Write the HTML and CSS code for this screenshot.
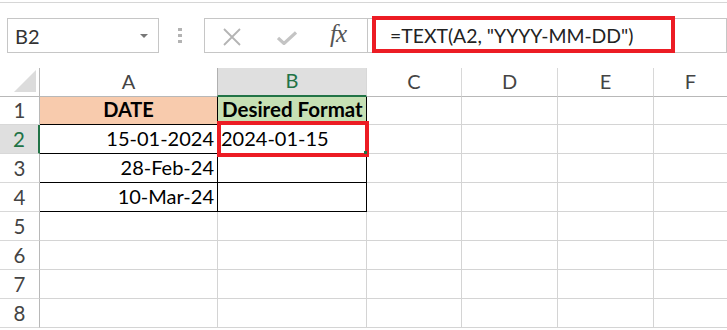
FILE: index.html
```html
<!DOCTYPE html>
<html>
<head>
<meta charset="utf-8">
<link rel="stylesheet" href="styles.css">
</head>
<body>
<div class="app">
  <div class="ribbon-edge"></div>
  <div class="formula-row">
    <div class="name-box">
      <span class="name-text">B2</span>
      <span class="dropdown"></span>
    </div>
    <div class="grip"><i></i><i></i><i></i></div>
    <div class="buttons">
      <svg class="icon-x" width="18" height="18" viewBox="0 0 18 18"><path d="M1 1 L17 17 M17 1 L1 17" stroke="#b4b4b4" stroke-width="1.8" fill="none"/></svg>
      <svg class="icon-check" width="20" height="14" viewBox="0 0 20 14"><path d="M1 7 L7 12.5 L19 1.5" stroke="#c4c4c4" stroke-width="3.2" fill="none" stroke-linejoin="miter"/></svg>
      <span class="fx">fx</span>
    </div>
    <div class="formula-input">
      <span class="formula-text">=TEXT(A2, "YYYY-MM-DD")</span>
      <div class="red-box formula-mark"></div>
    </div>
  </div>

  <div class="sheet">
    <div class="corner"><svg width="22" height="22" viewBox="0 0 22 22"><polygon points="22,0 22,22 0,22" fill="#dcdcdc"/></svg></div>
    <div class="col-hdr">A</div>
    <div class="col-hdr active">B</div>
    <div class="col-hdr">C</div>
    <div class="col-hdr">D</div>
    <div class="col-hdr">E</div>
    <div class="col-hdr last">F</div>

    <div class="row-hdr">1</div>
    <div class="cell t-a head-a bold center">DATE</div>
    <div class="cell t-b head-b bold">Desired Format</div>
    <div class="cell"></div><div class="cell"></div><div class="cell"></div><div class="cell last"></div>

    <div class="row-hdr active">2</div>
    <div class="cell t-a right sel-left">15-01-2024</div>
    <div class="cell t-b overlay-host">2024-01-15<div class="red-box cell-mark"></div><span class="handle"></span></div>
    <div class="cell"></div><div class="cell"></div><div class="cell"></div><div class="cell last"></div>

    <div class="row-hdr">3</div>
    <div class="cell t-a right">28-Feb-24</div>
    <div class="cell t-b"></div>
    <div class="cell"></div><div class="cell"></div><div class="cell"></div><div class="cell last"></div>

    <div class="row-hdr">4</div>
    <div class="cell t-a right">10-Mar-24</div>
    <div class="cell t-b"></div>
    <div class="cell"></div><div class="cell"></div><div class="cell"></div><div class="cell last"></div>

    <div class="row-hdr">5</div>
    <div class="cell"></div><div class="cell"></div><div class="cell"></div><div class="cell"></div><div class="cell"></div><div class="cell last"></div>
    <div class="row-hdr">6</div>
    <div class="cell"></div><div class="cell"></div><div class="cell"></div><div class="cell"></div><div class="cell"></div><div class="cell last"></div>
    <div class="row-hdr">7</div>
    <div class="cell"></div><div class="cell"></div><div class="cell"></div><div class="cell"></div><div class="cell"></div><div class="cell last"></div>
    <div class="row-hdr">8</div>
    <div class="cell"></div><div class="cell"></div><div class="cell"></div><div class="cell"></div><div class="cell"></div><div class="cell last"></div>
  </div>
</div>
</body>
</html>
```

FILE: styles.css
```css
* { box-sizing: border-box; }
html, body { margin: 0; padding: 0; background: #fff; }
body { width: 727px; height: 330px; overflow: hidden; font-family: Lato, "Open Sans", sans-serif; }

.app { width: 727px; }

.ribbon-edge { height: 3px; border-bottom: 1px solid #d6d6d6; }

.formula-row {
  display: flex;
  align-items: stretch;
  height: 35px;
  margin-top: 15px;
}
.name-box {
  margin-left: 7px;
  width: 152px;
  border: 1px solid #c6c6c6;
  display: flex;
  align-items: center;
  justify-content: space-between;
  padding: 0 10px 0 7px;
}
.name-text { font-size: 20px; color: #333; }
.dropdown {
  width: 0; height: 0;
  border-left: 4px solid transparent;
  border-right: 4px solid transparent;
  border-top: 4px solid #777;
}
.grip {
  width: 45px;
  display: flex;
  flex-direction: column;
  justify-content: center;
  gap: 3px;
  padding-left: 19px;
}
.grip i { display: block; width: 4px; height: 3px; background: #b3b3b3; }

.buttons {
  width: 164px;
  border: 1px solid #c6c6c6;
  display: flex;
  align-items: center;
  padding-left: 18px;
}
.icon-x { margin-top: 2px; }
.icon-check { margin-left: 36px; margin-top: 5px; }
.fx {
  margin-left: 33px;
  font-family: "Liberation Serif", serif;
  font-style: italic;
  font-size: 25px;
  color: #555;
  margin-top: -3px;
  letter-spacing: -1px;
}

.formula-input {
  flex: 1;
  border: 1px solid #c6c6c6;
  border-left: none;
  display: flex;
  align-items: center;
  padding-left: 22px;
  position: relative;
}
.formula-text { font-size: 19.4px; color: #222; }

.red-box { position: absolute; border: 4px solid #ec1c24; }
.formula-mark { left: 4px; top: -3px; width: 303px; height: 37px; }

.sheet {
  margin-top: 15px;
  display: grid;
  grid-template-columns: 40px 178px 149px 95px 96px 96px 1fr;
  grid-template-rows: 29px 28px repeat(7, 29px);
}
.corner {
  border-right: 1px solid #b8b8b8;
  border-bottom: 1px solid #b8b8b8;
  display: flex;
  align-items: flex-end;
  justify-content: flex-end;
  padding: 0 3px 4px 0;
}
.col-hdr {
  border-right: 1px solid #d8d8d8;
  border-bottom: 1px solid #b8b8b8;
  display: flex;
  align-items: flex-end;
  justify-content: center;
  padding-bottom: 3px;
  font-size: 20px;
  color: #444;
}
.col-hdr.active {
  background: #dfdfdf;
  color: #217346;
  border-bottom: 2px solid #217346;
  border-left: 1px solid #b0b0b0;
  margin-left: -1px;
}
.col-hdr.last, .cell.last { border-right: none; }

.row-hdr {
  border-right: 1px solid #b8b8b8;
  border-bottom: 1px solid #d8d8d8;
  display: flex;
  align-items: flex-end;
  justify-content: center;
  padding-bottom: 2px;
  font-size: 20.5px;
  color: #444;
}
.row-hdr.active {
  background: #dfdfdf;
  color: #217346;
  border-right: 2px solid #217346;
}

.cell {
  border-right: 1px solid #d4d4d4;
  border-bottom: 1px solid #d4d4d4;
  display: flex;
  align-items: flex-end;
  padding: 0 3px 3px 3px;
  font-size: 20px;
  color: #000;
  white-space: nowrap;
}
.t-a, .t-b { border-right: 1px solid #000; border-bottom: 1px solid #000; }
.head-a { background: #f8cbad; }
.head-a.bold { font-size: 20px; }
.head-b { background: #c6e0b4; padding-left: 4px; font-size: 20.5px; }
.bold { font-weight: bold; }
.center { justify-content: center; }
.right { justify-content: flex-end; }

.overlay-host { position: relative; }
.cell-mark { left: -1px; top: -4px; right: -3px; bottom: -4px; border-width: 4px; }
.handle {
  position: absolute;
  right: -1px; bottom: -1px;
  width: 3px; height: 3px;
  background: #217346;
}
```
